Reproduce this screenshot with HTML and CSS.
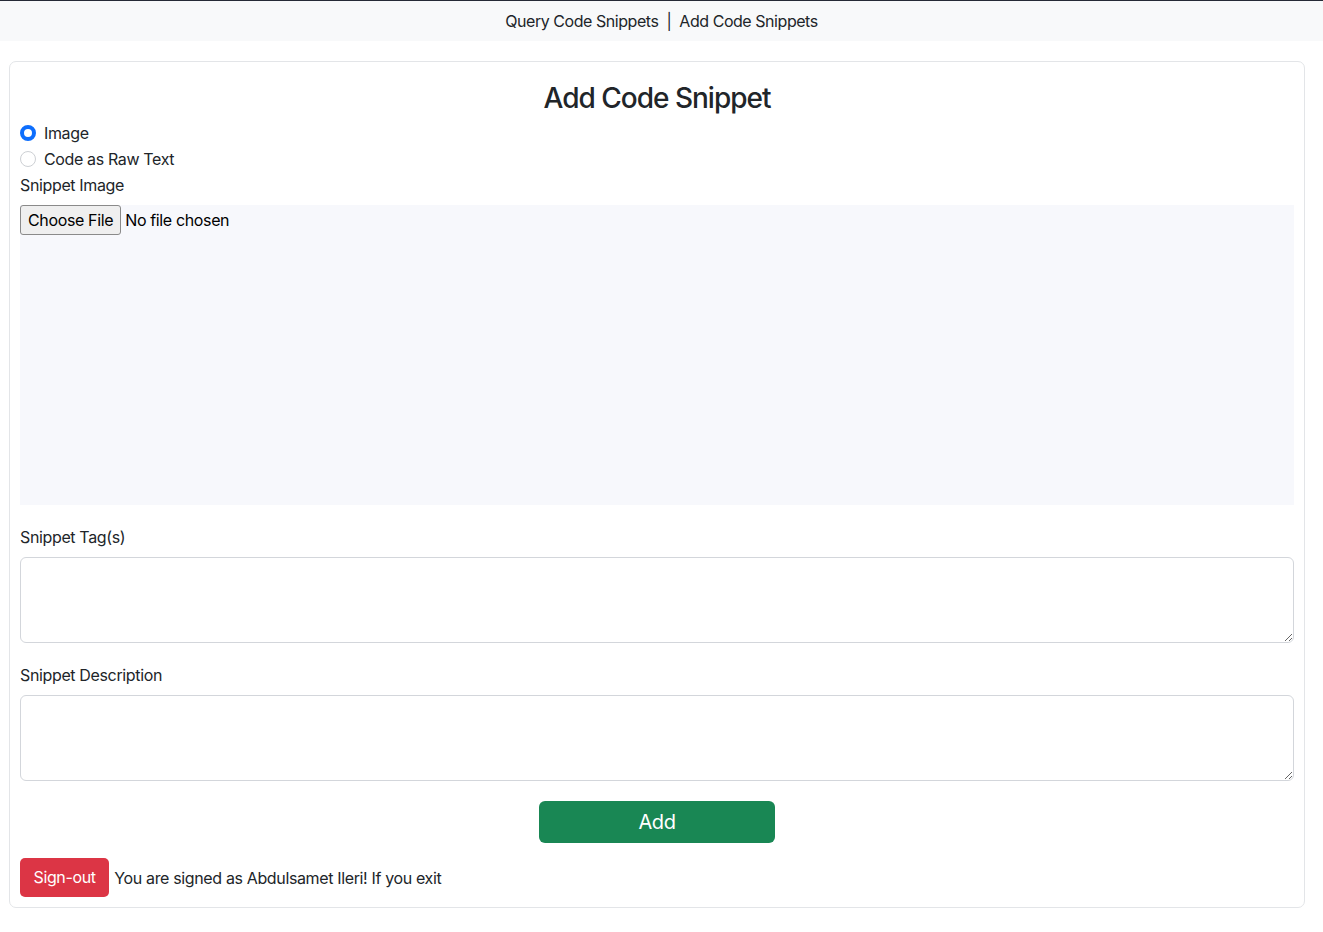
FILE: index.html
```html
<!DOCTYPE html>
<html lang="en">
<head>
<meta charset="utf-8">
<title>Add Code Snippet</title>
<link rel="stylesheet" href="styles.css">
</head>
<body>
<nav class="navbar">
  <a class="nav-link" href="#">Query Code Snippets</a>
  <span class="sep">|</span>
  <a class="nav-link" href="#">Add Code Snippets</a>
</nav>
<main class="card">
  <h3 class="title">Add Code Snippet</h3>
  <div class="form-check">
    <input class="radio" type="radio" name="kind" id="kind-image" checked>
    <label for="kind-image">Image</label>
  </div>
  <div class="form-check">
    <input class="radio" type="radio" name="kind" id="kind-raw">
    <label for="kind-raw">Code as Raw Text</label>
  </div>
  <label class="field-label" for="snippet-image">Snippet Image</label>
  <div class="image-area">
    <input class="file-input" type="file" id="snippet-image">
  </div>
  <label class="field-label gap-top" for="tags">Snippet Tag(s)</label>
  <textarea class="form-control" id="tags"></textarea>
  <label class="field-label gap-top" for="desc">Snippet Description</label>
  <textarea class="form-control" id="desc"></textarea>
  <div class="actions">
    <button class="btn btn-success" type="button">Add</button>
  </div>
  <div class="signout-row">
    <button class="btn btn-danger" type="button">Sign-out</button> You are signed as Abdulsamet Ileri! If you exit
  </div>
</main>
</body>
</html>
```

FILE: styles.css
```css
* { box-sizing: border-box; }

body {
  margin: 0;
  font-family: Inter, "Noto Sans", "Liberation Sans", sans-serif;
  font-size: 16px;
  line-height: 1.5;
  letter-spacing: -0.36px;
  color: #212529;
  background: #fff;
}

.navbar {
  height: 41px;
  border-top: 1px solid #262a36;
  background: #f8f9fa;
  display: flex;
  justify-content: center;
  align-items: center;
  gap: 8px;
  letter-spacing: -0.45px;
}

.nav-link {
  color: #212529;
  text-decoration: none;
}

.sep { color: #212529; }

.card {
  display: block;
  margin: 20px 0 0 9px;
  width: 1296px;
  border: 1px solid #e3e5e8;
  border-radius: 7px;
  padding: 10px;
}

.title {
  margin: 10px 0 5px;
  text-align: center;
  font-size: 28px;
  font-weight: 500;
  line-height: 1.2;
  letter-spacing: -1px;
}

.form-check {
  display: flex;
  align-items: center;
  gap: 8px;
  margin-bottom: 2px;
  height: 24px;
}

.radio {
  appearance: none;
  -webkit-appearance: none;
  margin: 0;
  width: 16px;
  height: 16px;
  border-radius: 50%;
  border: 1px solid #cdd0d4;
  background: #fff;
}

.radio:checked {
  border: 4.5px solid #0d6efd;
  background: #fff;
}

.field-label {
  display: block;
  margin-bottom: 8px;
}

.gap-top { margin-top: 20px; }

.image-area {
  height: 300px;
  background: #f7f8fc;
}

.file-input {
  font-family: Inter, "Noto Sans", "Liberation Sans", sans-serif;
  font-size: 16px;
  letter-spacing: -0.36px;
  color: #000;
  line-height: 22px;
}

.file-input::file-selector-button {
  font-family: inherit;
  font-size: 16px;
  letter-spacing: -0.36px;
  height: 30px;
  padding: 0 7px;
  margin-right: 4px;
  border: 1px solid #8a8a8a;
  border-radius: 3px;
  background: #efefef;
  color: #000;
}

.form-control {
  display: block;
  width: 100%;
  height: 86px;
  border: 1px solid #d3d6db;
  border-radius: 6px;
  resize: vertical;
  font: inherit;
  padding: 6px 12px;
}

.actions {
  margin-top: 20px;
  display: flex;
  justify-content: center;
}

.btn {
  font-family: inherit;
  letter-spacing: -0.36px;
  border: none;
  color: #fff;
  cursor: pointer;
}

.btn-success {
  width: 236px;
  height: 42px;
  background: #198754;
  border-radius: 6px;
  font-size: 20px;
}

.signout-row {
  margin-top: 15px;
  line-height: 24px;
}

.btn-danger {
  background: #dc3545;
  border-radius: 5px;
  font-size: 16px;
  line-height: 24px;
  height: 39px;
  padding: 0 13.5px;
  margin-right: 1px;
}
```
